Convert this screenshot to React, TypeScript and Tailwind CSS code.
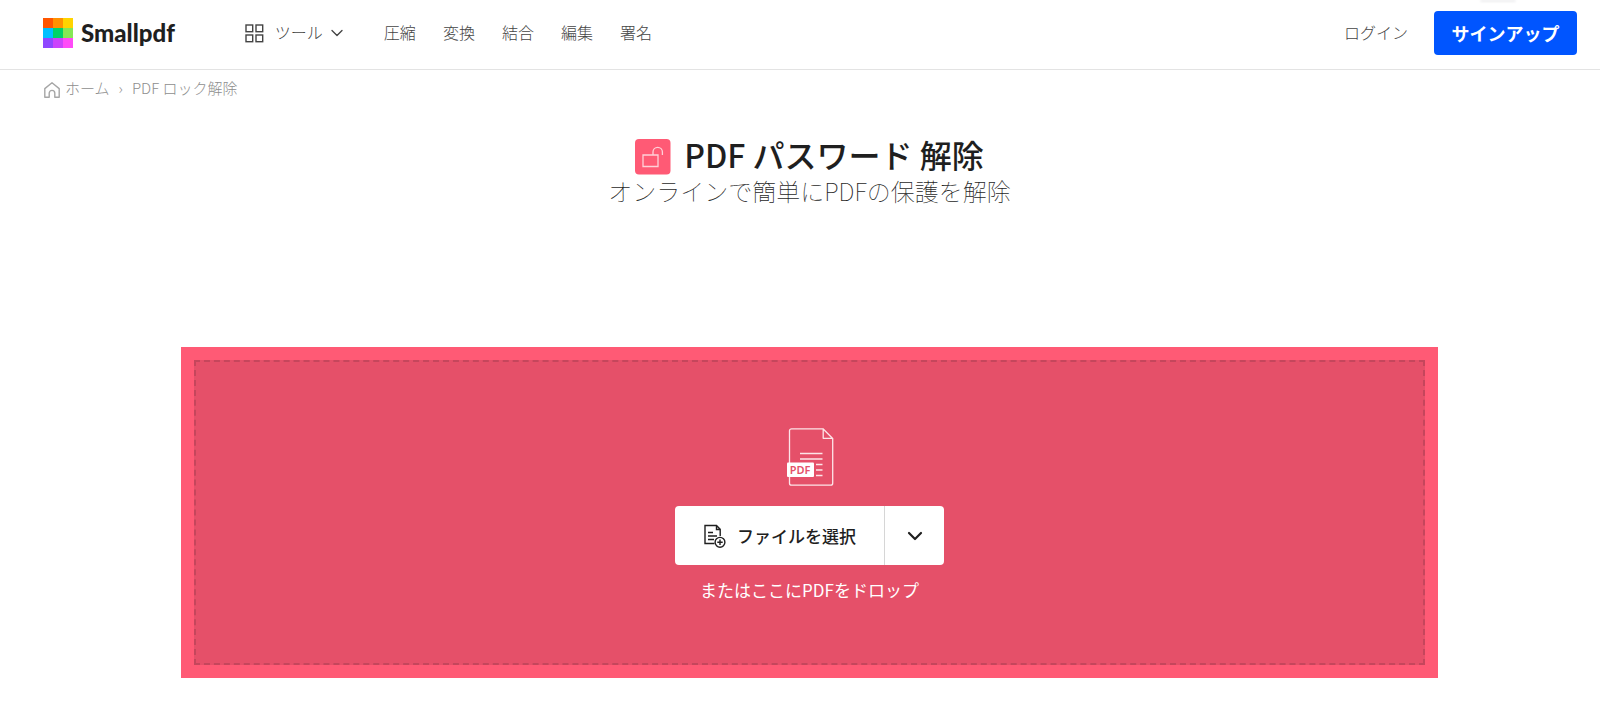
import { ChevronDown } from 'lucide-react';

const navLinks = ['圧縮', '変換', '結合', '編集', '署名'];

const logoColors = [
  '#ff5500', '#ff9100', '#ffd400',
  '#00c0ff', '#00d267', '#86e756',
  '#8f47ff', '#cb43fb', '#ff4bf8',
];

function Logo() {
  return (
    <a href="#" className="flex items-center gap-2">
      <svg className="w-[30px] h-[30px]" viewBox="0 0 30 30" aria-hidden="true">
        {logoColors.map((color, i) => (
          <rect key={color} x={(i % 3) * 10} y={Math.floor(i / 3) * 10} width="10" height="10" fill={color} />
        ))}
      </svg>
      <span className="font-['Lato',sans-serif] text-2xl font-black leading-8 text-[#1f1f1f]">Smallpdf</span>
    </a>
  );
}

function GridIcon() {
  return (
    <svg className="w-5 h-5" viewBox="0 0 20 20" fill="none" stroke="#444" strokeWidth="1.4" aria-hidden="true">
      <rect x="1" y="2" width="6.7" height="6.7" />
      <rect x="11" y="2" width="6.7" height="6.7" />
      <rect x="1" y="12" width="6.7" height="6.7" />
      <rect x="11" y="12" width="6.7" height="6.7" />
    </svg>
  );
}

function HomeIcon() {
  return (
    <svg className="w-4 h-4" viewBox="0 0 16 16" fill="none" stroke="#a6a6a6" strokeWidth="1.4" strokeLinejoin="round" aria-hidden="true">
      <path d="M.8 6.6 8 .8l7.2 5.8v8.6h-4.4v-4a2.8 2.8 0 0 0-5.6 0v4H.8z" />
    </svg>
  );
}

function UnlockIcon() {
  return (
    <svg className="w-9 h-9" viewBox="0 0 36 36" fill="none" aria-hidden="true">
      <rect width="35.5" height="35.5" rx="4" fill="#ff5a75" />
      <path d="M8 16h15v11.5H8zM18 16v-3a4.7 4.7 0 0 1 9.4 0v3" stroke="#ffd0d8" strokeWidth="1.3" />
    </svg>
  );
}

function PdfIcon() {
  return (
    <svg className="w-12 h-[58px]" viewBox="0 0 48 58" fill="none" aria-hidden="true">
      <path
        d="M37 .8H5.5a2 2 0 0 0-2 2v52.4a2 2 0 0 0 2 2h39.2a2 2 0 0 0 2-2V10.5zM37.2 1v9.3h9.3"
        stroke="#fde4e8"
        strokeWidth="1.3"
        strokeLinejoin="round"
      />
      <path d="M14 25.5h22.5M14 31h22.5M30 36.5h6.5M30 42h6.5M30 47.5h6.5" stroke="#fde4e8" strokeWidth="1.3" />
      <rect x="1" y="34.5" width="27" height="14.5" rx="1" fill="#fff" />
      <text
        x="14"
        y="45.5"
        textAnchor="middle"
        fontFamily="Noto Sans, sans-serif"
        fontSize="11"
        fontWeight="600"
        fill="#e55069"
      >
        PDF
      </text>
    </svg>
  );
}

function AddFileIcon() {
  return (
    <svg className="w-[22px] h-6" viewBox="0 0 22 24" fill="none" stroke="#1f1f1f" strokeWidth="1.4" aria-hidden="true">
      <path d="M16.2 12V5.2L12.5 1.5H1v18h9.5M12.5 1.5v4h3.7" />
      <path d="M4 8.5h5M4 12h9M4 15.5h6" />
      <circle cx="16" cy="18.3" r="4.9" />
      <path d="M16 15.6V21M13.3 18.3h5.4" />
    </svg>
  );
}

export default function App() {
  return (
    <div className="bg-white font-['Noto_Sans_CJK_JP',sans-serif] text-[#1f1f1f]">
      {/* Header */}
      <header className="relative flex items-center h-[70px] pl-[43px] pr-[23px] pb-1 border-b border-[#e3e3e3]">
        <Logo />
        <nav className="flex items-center ml-[70px] text-base leading-5 font-light text-[#444]">
          <button className="flex items-center gap-[10px]">
            <GridIcon />
            <span className="pb-[2px]">ツール</span>
            <ChevronDown className="w-5 h-5 -ml-[6px]" strokeWidth={1.6} />
          </button>
          <div className="flex gap-[27px] ml-[37px] pb-[2px]">
            {navLinks.map((label) => (
              <a key={label} href="#">{label}</a>
            ))}
          </div>
        </nav>
        <a href="#" className="ml-auto pb-[2px] text-base leading-5 font-light text-[#444]">ログイン</a>
        <button className="w-[143px] h-11 ml-[26px] rounded bg-[#0055ff] text-lg font-bold text-white">
          サインアップ
        </button>
        {/* Edge of the floating widget above the page */}
        <div className="absolute top-0 right-[84px] w-9 h-[2px] rounded-b-full bg-[#ececee] blur-[1px]" />
      </header>

      <main>
        {/* Breadcrumb */}
        <nav aria-label="breadcrumb" className="flex items-center h-9 px-11 text-[15px] leading-5 font-light text-[#8e8e8e]">
          <a href="#" className="flex items-end gap-[5px]">
            <HomeIcon />
            <span>ホーム</span>
          </a>
          <span className="mx-[9px]">›</span>
          <span>PDF ロック解除</span>
        </nav>

        <div className="pl-[181px] pr-[162px]">
          {/* Title */}
          <div className="pt-[30px] text-center">
            <h1 className="flex items-end justify-center gap-[13px] text-[32px] leading-9 font-medium">
              <UnlockIcon />
              <span className="pb-[3px]">PDF パスワード 解除</span>
            </h1>
            <p className="text-2xl leading-8 font-thin">オンラインで簡単にPDFの保護を解除</p>
          </div>

          {/* Drop zone */}
          <section className="mt-[140px] p-[13px] bg-[#ff5a75]">
            <div className="flex flex-col items-center pt-[66px] pb-[61px] border-2 border-dashed border-[#c5465c] bg-[#e55069]">
              <PdfIcon />
              <div className="flex h-[59px] mt-5 rounded bg-white">
                <button className="flex items-center gap-[11px] pl-[29px] pr-[28px] text-[17px] font-medium">
                  <AddFileIcon />
                  ファイルを選択
                </button>
                <button aria-label="ファイルの選択元" className="flex items-center justify-center w-[60px] border-l border-[#d6d6d6]">
                  <ChevronDown className="w-6 h-6" strokeWidth={2.2} />
                </button>
              </div>
              <p className="mt-[13px] text-[17px] leading-6 text-white">またはここにPDFをドロップ</p>
            </div>
          </section>
        </div>
      </main>
    </div>
  );
}
